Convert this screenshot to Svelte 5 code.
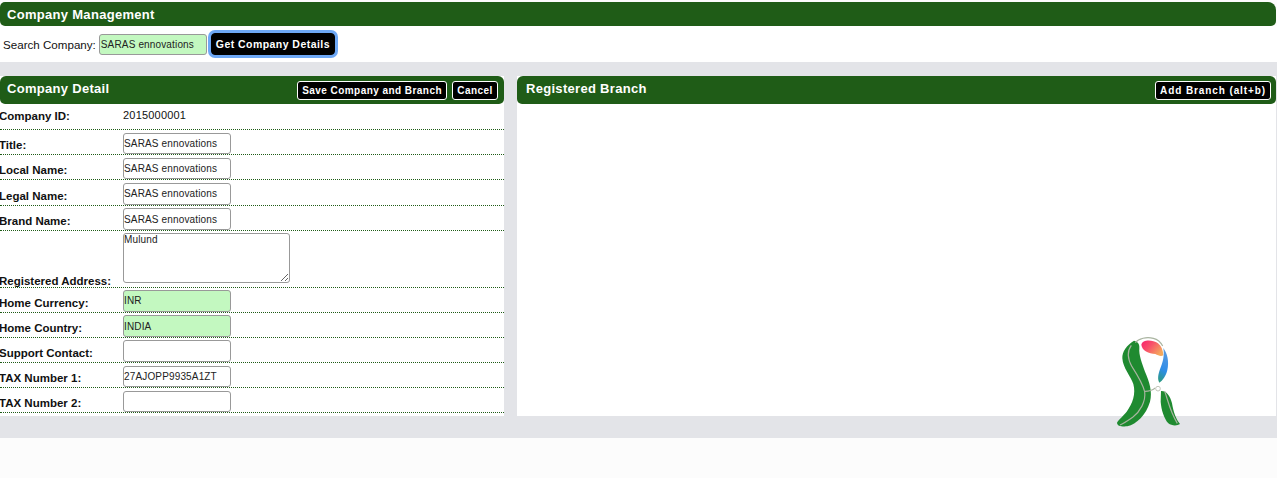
<script>
	const rows = [
		{ label: "Title:", value: "SARAS ennovations" },
		{ label: "Local Name:", value: "SARAS ennovations" },
		{ label: "Legal Name:", value: "SARAS ennovations" },
		{ label: "Brand Name:", value: "SARAS ennovations" },
		{ label: "Registered Address:", value: "Mulund", area: true },
		{ label: "Home Currency:", value: "INR", pick: true },
		{ label: "Home Country:", value: "INDIA", pick: true },
		{ label: "Support Contact:", value: "" },
		{ label: "TAX Number 1:", value: "27AJOPP9935A1ZT" },
		{ label: "TAX Number 2:", value: "" }
	];
</script>

<div class="page">
	<div class="bar main-bar">Company Management</div>
	<div class="search">
		<label for="search-company">Search Company:</label>
		<input id="search-company" class="field pick search-input" value="SARAS ennovations" />
		<button class="btn focus">Get Company Details</button>
	</div>

	<div class="panels">
		<section class="left">
			<div class="bar panel-bar">
				<span>Company Detail</span>
				<div class="actions">
					<button class="btn">Save Company and Branch</button>
					<button class="btn">Cancel</button>
				</div>
			</div>
			<div class="row id-row">
				<span class="label">Company ID:</span>
				<span class="id">2015000001</span>
			</div>
			{#each rows as row}
				<div class="row" class:area-row={row.area}>
					<span class="label">{row.label}</span>
					{#if row.area}
						<textarea class="field area">{row.value}</textarea>
					{:else}
						<input class="field" class:pick={row.pick} value={row.value} />
					{/if}
				</div>
			{/each}
		</section>

		<section class="right">
			<div class="bar panel-bar branch-bar">
				<span>Registered Branch</span>
				<button class="btn add">Add Branch (alt+b)</button>
			</div>
		</section>
	</div>

	<div class="foot"></div>

	<svg class="logo" viewBox="0 0 360 360" width="120" height="120" aria-hidden="true">
		<defs>
			<linearGradient id="warm" x1="0" y1="0" x2="1" y2="0.6">
				<stop offset="0" stop-color="#f8206e" />
				<stop offset="0.45" stop-color="#f8506a" />
				<stop offset="1" stop-color="#f4a85c" />
			</linearGradient>
			<linearGradient id="cool" x1="0.5" y1="0" x2="0.3" y2="1">
				<stop offset="0" stop-color="#5c9be0" />
				<stop offset="0.6" stop-color="#2f8de8" />
				<stop offset="1" stop-color="#2a9a80" />
			</linearGradient>
		</defs>
		<path d="M132 62 C110 75 96 95 97 115 C99 145 122 168 130 192 C138 222 128 250 110 275 C100 288 86 298 81 308 C82 318 92 320 112 319 C140 312 168 285 180 245 C188 215 178 185 165 155 C156 130 146 105 148 85 C149 75 146 65 132 62 Z" fill="#1f8a30" />
		<path d="M213 213 C228 212 240 225 246 250 C250 275 258 298 270 312 C262 318 245 318 235 310 C222 295 214 270 212 245 Z" fill="#1f8a30" />
		<path d="M154 74 C158 58 186 58 204 70 C214 78 219 90 220 106 C212 110 204 106 196 102 C176 100 156 92 154 74 Z" fill="url(#warm)" />
		<path d="M220 84 C232 100 238 125 232 150 C228 168 218 182 208 188 C202 178 204 165 210 148 C218 128 224 108 220 84 Z" fill="url(#cool)" />
		<g fill="none" stroke="#a9b4a0" stroke-width="3.5">
			<path d="M136 68 C146 55 170 50 190 55 C202 58 212 66 218 78" />
			<path d="M124 76 C112 92 112 115 126 140 C142 165 158 190 164 215 C168 245 150 275 128 292 C114 302 102 310 90 315" />
			<path d="M165 214 C176 214 188 210 196 204" />
			<path d="M224 214 C234 240 238 270 262 310" />
		</g>
		<circle cx="204" cy="206" r="7" fill="#fff" stroke="#c2c6ba" stroke-width="3" />
	</svg>
</div>

<style>
	:global(body) {
		margin: 0;
		background: #fcfcfc;
		font-family: "Liberation Sans", Arial, sans-serif;
	}

	.page {
		position: relative;
		height: 478px;
		overflow: hidden;
		padding-top: 2px;
		box-sizing: border-box;
	}

	.bar {
		background: #1f5c17;
		color: #fff;
		font-weight: 700;
		box-sizing: border-box;
	}

	.main-bar {
		height: 24px;
		padding: 0 7px;
		margin-right: 1px;
		line-height: 25px;
		font-size: 13px;
		letter-spacing: 0.3px;
		border-radius: 5px 8px 5px 5px;
	}

	.search {
		display: flex;
		align-items: center;
		height: 36px;
		background: #fff;
		padding-left: 3px;
		font-size: 11.6px;
		color: #111;
	}

	.search label {
		margin-right: 3px;
	}

	.field {
		box-sizing: border-box;
		width: 108px;
		height: 21.4px;
		padding: 0;
		font: 10px "Liberation Sans", Arial, sans-serif;
		letter-spacing: 0.15px;
		color: #222;
		background: #fff;
		border: 1px solid #999;
		border-radius: 3px;
		outline: none;
	}

	.pick {
		background: #c3f8c0;
	}

	.search-input {
		margin-top: 1px;
		padding-left: 1px;
	}

	.btn {
		background: #000;
		color: #fff;
		border: 1px solid #fff;
		border-radius: 3px;
		padding: 0 4px;
		height: 19px;
		min-width: 46px;
		font: 700 10px "Liberation Sans", Arial, sans-serif;
		letter-spacing: 0.45px;
		white-space: nowrap;
	}

	.focus {
		height: 22px;
		padding: 0 4px;
		margin-left: 4px;
		font-size: 10.5px;
		border: 1px solid #000;
		border-radius: 4px;
		box-shadow: 0 0 0 3px #6ea8f5;
	}

	.add {
		letter-spacing: 0.9px;
	}

	.panels {
		display: flex;
		gap: 13px;
		height: 354px;
		padding-top: 14px;
		background: #e3e4e8;
		box-sizing: border-box;
	}

	.left {
		width: 504px;
		flex: none;
		background: #fff;
		height: 340px;
	}

	.right {
		flex: 1;
		margin-right: 1px;
		background: #fff;
		height: 340px;
	}

	.panel-bar {
		display: flex;
		align-items: center;
		justify-content: space-between;
		height: 28px;
		padding: 0 6px 0 7px;
		font-size: 13px;
		letter-spacing: 0.3px;
		border-radius: 6px 6px 5px 5px;
	}

	.panel-bar > span {
		margin-top: -3px;
	}

	.branch-bar {
		padding: 0 5px 0 9px;
	}

	.actions {
		display: flex;
		gap: 5px;
	}

	.row {
		display: flex;
		align-items: flex-end;
		height: 25.2px;
		box-sizing: border-box;
		border-bottom: 1px dotted #1f5c17;
		font-size: 11.5px;
		color: #111;
	}

	.id-row {
		height: 26px;
		align-items: center;
	}

	.area-row {
		height: 56.8px;
	}

	.area-row ~ .row {
		height: 25.1px;
	}

	.label {
		width: 123px;
		flex: none;
		font-weight: 700;
		margin-left: -1px;
		margin-right: 1px;
		padding-bottom: 2px;
		line-height: 14px;
		white-space: nowrap;
	}

	.id-row .label {
		padding: 0 0 2px;
	}

	.area-row .label {
		margin-bottom: -3px;
	}

	.id {
		font-size: 11px;
		letter-spacing: 0.2px;
		margin-top: -3px;
	}

	.area {
		display: block;
		width: 167px;
		height: 50px;
		margin-bottom: 4px;
		resize: both;
	}

	.foot {
		height: 22px;
		background: #e3e4e8;
	}

	.logo {
		position: absolute;
		left: 1090px;
		top: 320px;
		filter: blur(0.4px);
	}
</style>
